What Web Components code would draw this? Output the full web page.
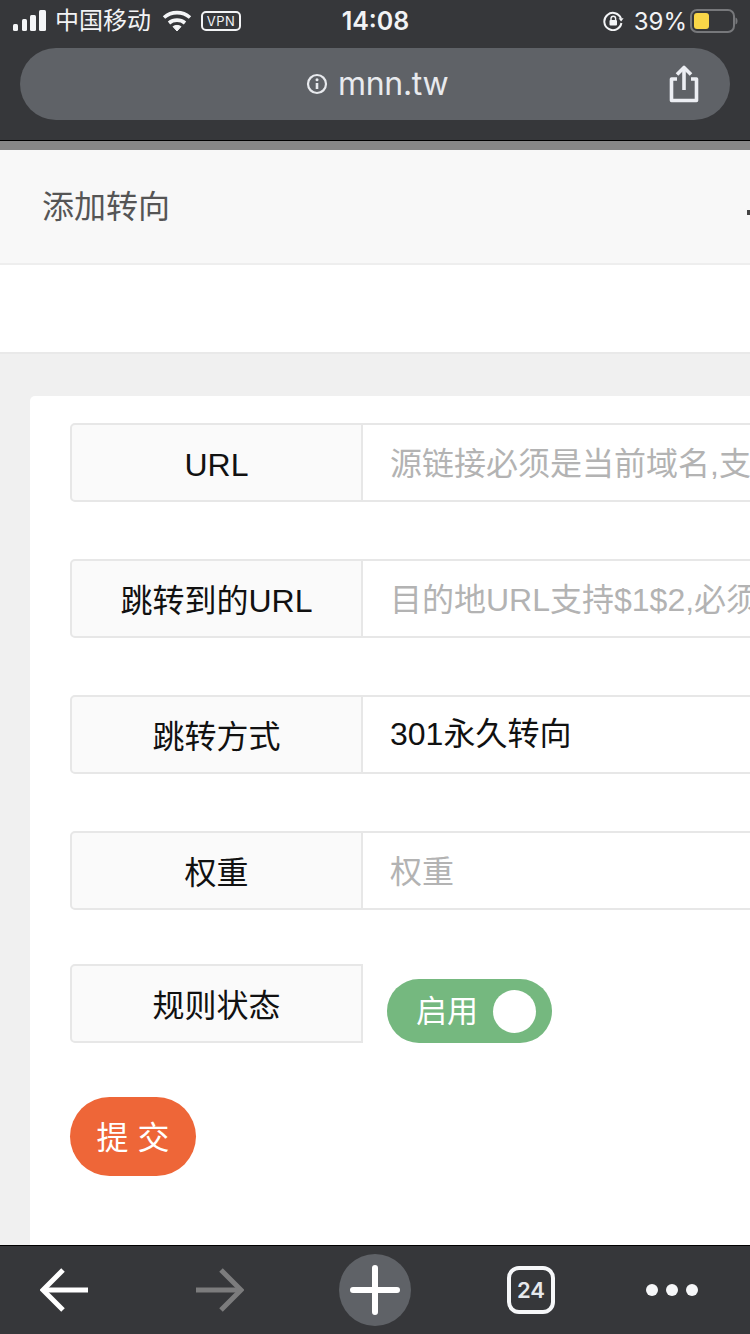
<!DOCTYPE html>
<html lang="zh-CN">
<head>
<meta charset="utf-8">
<title>添加转向</title>
<style>
    html, body { margin: 0; padding: 0; background: #f0f0f0; }
    body {
        width: 750px;
        height: 1334px;
        overflow: hidden;
        display: flex;
        flex-direction: column;
        font-family: "Liberation Sans", "Noto Sans CJK SC", sans-serif;
    }
</style>
</head>
<body>
    <browser-chrome></browser-chrome>
    <page-header>添加转向</page-header>
    <form-card>
        <form-row label="URL" latin placeholder="源链接必须是当前域名,支"></form-row>
        <form-row label="跳转到的URL" placeholder="目的地URL支持$1$2,必须"></form-row>
        <form-row label="跳转方式" value="301永久转向"></form-row>
        <form-row label="权重" placeholder="权重"></form-row>
        <form-row label="规则状态" bare><switch-toggle>启用</switch-toggle></form-row>
        <submit-button>提 交</submit-button>
    </form-card>
    <browser-toolbar></browser-toolbar>

<script>
class BrowserChrome extends HTMLElement {
    constructor() {
        super();
        this.attachShadow({ mode: 'open' });
        this.shadowRoot.innerHTML = `
            <style>
                :host {
                    display: block;
                    flex: none;
                    height: 140px;
                    background: #36373a;
                    border-bottom: 1px solid #000;
                    color: #f2f3f5;
                    font-family: Inter, "Noto Sans CJK SC", sans-serif;
                }
                svg { display: block; flex: none; }
                .status {
                    height: 48px;
                    display: grid;
                    grid-template-columns: 1fr auto 1fr;
                    align-items: center;
                    padding: 0 12px 6px 13px;
                    box-sizing: border-box;
                }
                .left, .right { display: flex; align-items: center; }
                .right { justify-content: flex-end; }
                .carrier { font-size: 24px; margin-left: 9px; line-height: 30px; }
                .wifi { margin-left: 11px; }
                .vpn {
                    margin-left: 9px;
                    width: 40px;
                    height: 20px;
                    box-sizing: border-box;
                    border: 2px solid #f2f3f5;
                    border-radius: 5px;
                    font-size: 13px;
                    line-height: 16px;
                    text-align: center;
                    letter-spacing: 0.5px;
                }
                .time { font-size: 25px; font-weight: 600; }
                .percent { font-size: 24px; margin-left: 10px; }
                .battery { margin-left: 3px; }
                .url {
                    height: 72px;
                    margin: 0 20px;
                    padding: 0 31px 0 286px;
                    background: #5f6267;
                    border-radius: 36px;
                    display: flex;
                    align-items: center;
                    color: #e8eaee;
                    font-size: 32px;
                }
                .host { margin: 0 0 2px 10px; flex: 1; letter-spacing: -0.3px; }
            </style>
            <div class="status">
                <div class="left">
                    <svg width="33" height="22" viewBox="0 0 33 22" fill="#f4f5f7">
                        <rect x="0" y="14" width="5" height="7" rx="1.5"/>
                        <rect x="9" y="9" width="5" height="12" rx="1.5"/>
                        <rect x="17" y="5" width="6" height="16" rx="1.5"/>
                        <rect x="26" y="0" width="7" height="21" rx="1.5"/>
                    </svg>
                    <span class="carrier">中国移动</span>
                    <svg class="wifi" width="30" height="22" viewBox="0 0 30 22" fill="none" stroke="#f4f5f7" stroke-width="3.6">
                        <path d="M2 7.5C9.5 1 20.5 1 28 7.5"/>
                        <path d="M7 13C11.5 9.2 18.5 9.2 23 13"/>
                        <path d="M11 16.6C13.3 15 16.7 15 19 16.6L15 21Z" fill="#f4f5f7" stroke-width="1"/>
                    </svg>
                    <span class="vpn">VPN</span>
                </div>
                <span class="time">14:08</span>
                <div class="right">
                    <svg width="21" height="20" viewBox="0 0 21 20" fill="none" stroke="#f4f5f7" stroke-width="2">
                        <path d="M18 7.5A8.6 8.6 0 1 0 18.4 12"/>
                        <path d="M15.6 7.2h5l-2.5 3.2Z" fill="#f4f5f7" stroke="none"/>
                        <rect x="6.5" y="9" width="7.5" height="5.6" rx="1" fill="#f4f5f7" stroke="none"/>
                        <path d="M8 9V7.5a2.3 2.3 0 0 1 4.6 0V9" stroke-width="1.4"/>
                    </svg>
                    <span class="percent">39%</span>
                    <svg class="battery" width="48" height="24" viewBox="0 0 48 24">
                        <rect x="1" y="1" width="43" height="22" rx="6" fill="none" stroke="#77787b" stroke-width="2"/>
                        <rect x="4" y="4" width="15" height="16" rx="3" fill="#f9d648"/>
                        <path d="M45.5 8.5c1.5 .5 2 1.8 2 3.500s-.5 3-2 3.500Z" fill="#77787b"/>
                    </svg>
                </div>
            </div>
            <div class="url">
                <svg width="22" height="22" viewBox="0 0 22 22" fill="none" stroke="#e8eaee" stroke-width="2.2">
                    <circle cx="11" cy="11" r="9"/>
                    <path d="M11 10v6" stroke-width="2.6"/>
                    <circle cx="11" cy="6.800" r="1.500" fill="#e8eaee" stroke="none"/>
                </svg>
                <span class="host">mnn.tw</span>
                <svg width="30" height="38" viewBox="0 0 30 38" fill="none" stroke="#eceef3" stroke-width="3.600" stroke-linejoin="round">
                    <path d="M15 3v22"/>
                    <path d="M8 9.500L15 2.500L22 9.500"/>
                    <path d="M8 14H2.500V35.500H27.500V14H22"/>
                </svg>
            </div>
        `;
    }
}

class PageHeader extends HTMLElement {
    constructor() {
        super();
        this.attachShadow({ mode: 'open' });
        this.shadowRoot.innerHTML = `
            <style>
                :host {
                    display: block;
                    flex: none;
                    border-top: 9px solid #878787;
                    background: #fff;
                }
                .title {
                    height: 113px;
                    padding-left: 42px;
                    background: #f8f8f8;
                    border-bottom: 2px solid #eeeeee;
                    display: flex;
                    align-items: center;
                    justify-content: space-between;
                    color: #555;
                    font-size: 32px;
                }
                .name { margin-bottom: 5px; }
                .cut { width: 3px; height: 5px; margin-top: 12px; background: #444; }
                .tabs { height: 87px; border-bottom: 2px solid #e9e9e9; }
            </style>
            <div class="title"><span class="name"><slot></slot></span><div class="cut"></div></div>
            <div class="tabs"></div>
        `;
    }
}

class FormCard extends HTMLElement {
    constructor() {
        super();
        this.attachShadow({ mode: 'open' });
        this.shadowRoot.innerHTML = `
            <style>
                :host {
                    display: block;
                    flex: 1;
                    min-height: 0;
                    overflow: hidden;
                    padding: 42px 0 0 30px;
                    background: #f0f0f0;
                }
                .card {
                    width: 1000px;
                    height: 900px;
                    box-sizing: border-box;
                    padding: 27px 0 0 40px;
                    background: #fff;
                    border-radius: 5px;
                }
            </style>
            <div class="card"><slot></slot></div>
        `;
    }
}

class FormRow extends HTMLElement {
    constructor() {
        super();
        this.attachShadow({ mode: 'open' });
    }

    escapeHtml(text) {
        const div = document.createElement('div');
        div.textContent = text || '';
        return div.innerHTML;
    }

    connectedCallback() {
        const label = this.getAttribute('label');
        const value = this.getAttribute('value');
        const placeholder = this.getAttribute('placeholder');
        const field = this.hasAttribute('bare')
            ? '<div class="bare"><slot></slot></div>'
            : `<div class="field ${value ? 'filled' : ''}">${this.escapeHtml(value || placeholder)}</div>`;

        this.shadowRoot.innerHTML = `
            <style>
                :host {
                    display: flex;
                    height: 79px;
                    margin-bottom: 57px;
                    font-size: 32px;
                }
                :host([bare]) { margin-top: -3px; margin-bottom: 54px; }
                .label {
                    flex: none;
                    width: 293px;
                    box-sizing: border-box;
                    border: 2px solid #e7e7e7;
                    border-radius: 5px 0 0 5px;
                    background: #fafafa;
                    color: #111;
                    display: flex;
                    align-items: center;
                    justify-content: center;
                    padding-bottom: 1px;
                }
                :host([latin]) .label { padding: 5px 0 0; }
                :host([bare]) .label { padding-bottom: 2px; }
                .field {
                    flex: 1;
                    box-sizing: border-box;
                    border: 2px solid #e7e7e7;
                    border-left: 0;
                    padding: 0 0 4px 27px;
                    display: flex;
                    align-items: center;
                    color: #b3b3b3;
                    white-space: nowrap;
                }
                .field.filled { color: #111; padding-bottom: 7px; }
                .bare { padding: 15px 0 0 24px; }
            </style>
            <div class="label">${this.escapeHtml(label)}</div>
            ${field}
        `;
    }
}

class SwitchToggle extends HTMLElement {
    constructor() {
        super();
        this.attachShadow({ mode: 'open' });
        this.shadowRoot.innerHTML = `
            <style>
                :host {
                    display: flex;
                    width: 165px;
                    height: 64px;
                    box-sizing: border-box;
                    padding: 0 16px 0 29px;
                    align-items: center;
                    justify-content: space-between;
                    border-radius: 32px;
                    background: #75b87f;
                    color: #fff;
                    font-size: 31px;
                }
                .text { margin-bottom: 6px; }
                .knob { width: 43px; height: 43px; border-radius: 50%; background: #fff; }
            </style>
            <span class="text"><slot></slot></span>
            <div class="knob"></div>
        `;
    }
}

class SubmitButton extends HTMLElement {
    constructor() {
        super();
        this.attachShadow({ mode: 'open' });
        this.shadowRoot.innerHTML = `
            <style>
                :host {
                    display: flex;
                    width: 126px;
                    height: 79px;
                    align-items: center;
                    justify-content: center;
                    border-radius: 40px;
                    background: #ee6638;
                    color: #fff;
                    font-size: 32px;
                }
                .text { white-space: pre; margin-bottom: 4px; }
            </style>
            <span class="text"><slot></slot></span>
        `;
    }
}

class BrowserToolbar extends HTMLElement {
    constructor() {
        super();
        this.attachShadow({ mode: 'open' });
        this.shadowRoot.innerHTML = `
            <style>
                :host {
                    display: flex;
                    flex: none;
                    height: 88px;
                    border-top: 1px solid #000;
                    background: #36373a;
                    align-items: center;
                    padding-left: 40px;
                    font-family: Inter, "Liberation Sans", sans-serif;
                }
                svg { display: block; flex: none; }
                .forward { margin-left: 108px; }
                .plus { margin-left: 95px; }
                .tabs {
                    margin-left: 96px;
                    width: 48px;
                    height: 48px;
                    box-sizing: border-box;
                    border: 4px solid #f6f7f9;
                    border-radius: 12px;
                    display: flex;
                    align-items: center;
                    justify-content: center;
                    color: #e6e8ec;
                    font-size: 22px;
                    font-weight: 600;
                }
                .more { margin-left: 91px; }
            </style>
            <svg width="48" height="44" viewBox="0 0 48 44" fill="none" stroke="#fff" stroke-width="5">
                <path d="M48 22H3"/>
                <path d="M23 2L3 22L23 42"/>
            </svg>
            <svg class="forward" width="48" height="44" viewBox="0 0 48 44" fill="none" stroke="#7c7c7d" stroke-width="5">
                <path d="M0 22H45"/>
                <path d="M25 2L45 22L25 42"/>
            </svg>
            <svg class="plus" width="72" height="72" viewBox="0 0 72 72">
                <circle cx="36" cy="36" r="36" fill="#5f6267"/>
                <path d="M14 36H58M36 14V58" stroke="#fff" stroke-width="6" stroke-linecap="round"/>
            </svg>
            <div class="tabs">24</div>
            <svg class="more" width="52" height="12" viewBox="0 0 52 12" fill="#f6f7f9">
                <circle cx="6" cy="6" r="6"/>
                <circle cx="26" cy="6" r="6"/>
                <circle cx="46" cy="6" r="6"/>
            </svg>
        `;
    }
}

customElements.define('browser-chrome', BrowserChrome);
customElements.define('page-header', PageHeader);
customElements.define('form-card', FormCard);
customElements.define('form-row', FormRow);
customElements.define('switch-toggle', SwitchToggle);
customElements.define('submit-button', SubmitButton);
customElements.define('browser-toolbar', BrowserToolbar);
</script>
</body>
</html>
